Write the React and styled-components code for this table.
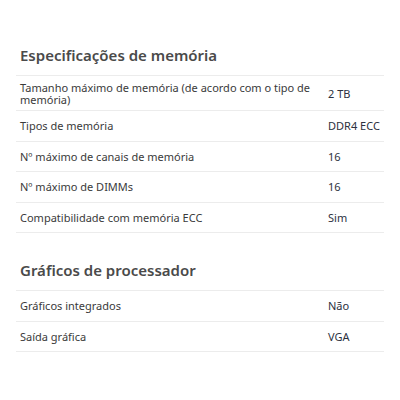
import React from "react";
import styled, { createGlobalStyle } from "styled-components";

const Global = createGlobalStyle`
  html, body { margin: 0; padding: 0; background: #fff; }
  body { font-family: "Noto Sans", "Open Sans", sans-serif; }
`;

const Page = styled.div`
  width: 400px;
  padding: 45px 16px 0 16px;
  box-sizing: border-box;
`;

const Section = styled.section`
  margin-bottom: 27px;
`;

const Heading = styled.h2`
  margin: 0 0 0 4px;
  font-size: 15px;
  font-weight: 600;
  color: #4a4a4a;
  line-height: 21px;
  padding-bottom: 9px;
`;

const Table = styled.div`
  border-top: 1px solid #ececec;
`;

const Row = styled.div`
  display: grid;
  grid-template-columns: 1fr 56px;
  column-gap: 12px;
  align-items: center;
  padding: ${(p) => (p.$tall ? "6px 0 5px 4px" : "8px 0 7.5px 4px")};
  border-bottom: 1px solid #ececec;
  font-size: 11px;
  line-height: ${(p) => (p.$tall ? "11.5px" : "14px")};
  color: #3a3a3a;
`;

const Label = styled.span``;

const Value = styled.span`
  color: #2c3140;
`;

const sections = [
  {
    title: "Especificações de memória",
    rows: [
      ["Tamanho máximo de memória (de acordo com o tipo de memória)", "2 TB", true],
      ["Tipos de memória", "DDR4 ECC"],
      ["Nº máximo de canais de memória", "16"],
      ["Nº máximo de DIMMs", "16"],
      ["Compatibilidade com memória ECC", "Sim"],
    ],
  },
  {
    title: "Gráficos de processador",
    rows: [
      ["Gráficos integrados", "Não"],
      ["Saída gráfica", "VGA"],
    ],
  },
];

export default function App() {
  return (
    <>
      <Global />
      <Page>
        {sections.map((s) => (
          <Section key={s.title}>
            <Heading>{s.title}</Heading>
            <Table>
              {s.rows.map(([l, v, tall]) => (
                <Row key={l} $tall={tall}>
                  <Label>{l}</Label>
                  <Value>{v}</Value>
                </Row>
              ))}
            </Table>
          </Section>
        ))}
      </Page>
    </>
  );
}
